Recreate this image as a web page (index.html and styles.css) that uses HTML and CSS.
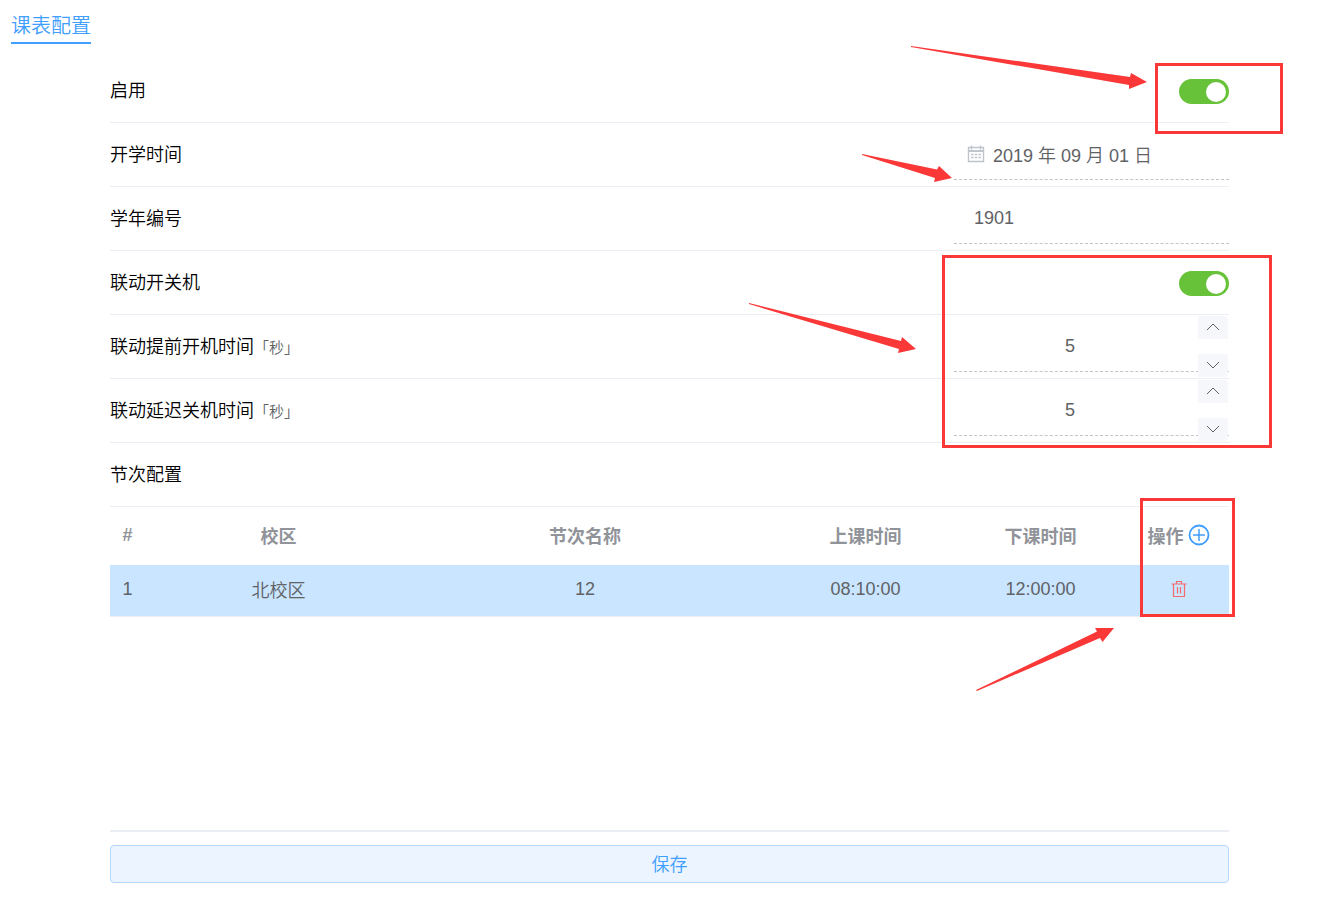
FILE: index.html
```html
<!DOCTYPE html>
<html lang="zh">
<head>
    <meta charset="UTF-8">
    <meta name="viewport" content="width=device-width, initial-scale=1.0">
    <title>课表配置</title>
    <link rel="stylesheet" href="styles.css">
</head>
<body>
    <h1 class="title">课表配置</h1>

    <form class="config">
        <div class="row">
            <label class="name" for="enable">启用</label>
            <input type="checkbox" class="switch" id="enable" checked>
        </div>
        <div class="row">
            <label class="name" for="startDate">开学时间</label>
            <div class="field date">
                <svg class="calendar" viewBox="0 0 18 18" fill="none" stroke="currentColor">
                    <path stroke-width="1.4" d="M1.500 2.500h15v14h-15zM4.500 .5v4M13.500 .5v4"/>
                    <path stroke-width="2" d="M1.500 6h15"/>
                    <path stroke-width="1.4" d="M4 9.500h10M4 12.500h10" stroke-dasharray="2.500 1.250"/>
                </svg>
                <input type="text" id="startDate" value="2019 年 09 月 01 日">
            </div>
        </div>
        <div class="row">
            <label class="name" for="yearNo">学年编号</label>
            <div class="field code">
                <input type="text" id="yearNo" value="1901">
            </div>
        </div>
        <div class="row">
            <label class="name" for="linkage">联动开关机</label>
            <input type="checkbox" class="switch" id="linkage" checked>
        </div>
        <div class="row">
            <label class="name" for="bootTime">联动提前开机时间<small>「秒」</small></label>
            <div class="field number">
                <input type="number" id="bootTime" value="5">
                <div class="steps">
                    <button type="button" aria-label="增加"><svg viewBox="0 0 14 8"><path d="M1 7l6-6 6 6"/></svg></button>
                    <button type="button" aria-label="减少"><svg viewBox="0 0 14 8"><path d="M1 1l6 6 6-6"/></svg></button>
                </div>
            </div>
        </div>
        <div class="row">
            <label class="name" for="shutTime">联动延迟关机时间<small>「秒」</small></label>
            <div class="field number">
                <input type="number" id="shutTime" value="5">
                <div class="steps">
                    <button type="button" aria-label="增加"><svg viewBox="0 0 14 8"><path d="M1 7l6-6 6 6"/></svg></button>
                    <button type="button" aria-label="减少"><svg viewBox="0 0 14 8"><path d="M1 1l6 6 6-6"/></svg></button>
                </div>
            </div>
        </div>
        <div class="row">
            <span class="name">节次配置</span>
        </div>

        <div class="table-box">
            <table>
                <thead>
                    <tr>
                        <th class="col-index">#</th>
                        <th class="col-campus">校区</th>
                        <th>节次名称</th>
                        <th class="col-time">上课时间</th>
                        <th class="col-time">下课时间</th>
                        <th class="col-action">
                            <div class="action">
                                操作
                                <button type="button" class="add" aria-label="添加">
                                    <svg viewBox="0 0 22 22" fill="none" stroke="currentColor">
                                        <circle cx="11" cy="11" r="9.5" stroke-width="1.8"/>
                                        <path d="M11 5v12M5 11h12" stroke-width="1.5"/>
                                    </svg>
                                </button>
                            </div>
                        </th>
                    </tr>
                </thead>
                <tbody>
                    <tr>
                        <td class="col-index">1</td>
                        <td>北校区</td>
                        <td>12</td>
                        <td>08:10:00</td>
                        <td>12:00:00</td>
                        <td>
                            <button type="button" class="remove" aria-label="删除">
                                <svg viewBox="0 0 16 18" fill="none" stroke="currentColor">
                                    <path stroke-width="1.2" d="M.5 4h15M5.500 4V1.500h5V4M2.500 4v12.500h11V4M6.500 7v6.500M9.500 7v6.500"/>
                                </svg>
                            </button>
                        </td>
                    </tr>
                </tbody>
            </table>
        </div>

        <button type="submit" class="save">保存</button>
    </form>

    <!-- 标注层 -->
    <svg class="marks" viewBox="0 0 1335 700">
        <g fill="none" stroke="#fb3838" stroke-width="3">
            <rect x="1156.5" y="64.5" width="125" height="68"/>
            <rect x="943.5" y="256.5" width="327" height="190"/>
            <rect x="1141.5" y="499.5" width="92" height="116"/>
        </g>
        <g fill="#fb3838">
            <path d="M911 46L1130 77L1131 73L1147 82L1129 89L1129 85L911 47z"/>
            <path d="M862 154L937 169.5L939 166L952 178L934 182L935 178L862 155z"/>
            <path d="M749 303L901 341L902 337L916 349L898 353L899 349L749 304z"/>
            <path d="M976 690L1097 631.5L1095 628L1114 628L1102.5 642L1100 638L977 691z"/>
        </g>
    </svg>
</body>
</html>
```
FILE: styles.css
```css
* {
    box-sizing: border-box;
}

body {
    display: flex;
    flex-direction: column;
    position: relative;
    min-height: 100vh;
    margin: 0;
    padding-bottom: 22px;
    background: #fff;
    color: #000;
    font-family: "Liberation Sans", "Noto Sans CJK SC", sans-serif;
    font-size: 18px;
    font-weight: 350;
}

button,
input {
    font: inherit;
}

button {
    padding: 0;
    border: none;
    background: none;
    cursor: pointer;
}

svg {
    display: block;
}

.title {
    align-self: flex-start;
    margin: 12px 11px 15px;
    padding-bottom: 2px;
    border-bottom: 2px solid #409eff;
    color: #409eff;
    font-size: 20px;
    font-weight: 350;
    line-height: 28px;
}

.config {
    flex: 1;
    display: flex;
    flex-direction: column;
    padding: 0 106px 0 110px;
}

.row {
    display: flex;
    align-items: center;
    justify-content: space-between;
    height: 64px;
    border-bottom: 1px solid #ebeef5;
}

.name {
    padding-bottom: 4px;
}

.name small {
    color: #606266;
    font-size: 15px;
}

/* 开关 */
.switch {
    appearance: none;
    display: flex;
    align-items: center;
    justify-content: flex-end;
    width: 50px;
    height: 25px;
    margin: 2px 0 0;
    padding: 0 3px;
    border-radius: 13px;
    background: #67c23a;
    cursor: pointer;
}

.switch::before {
    content: '';
    width: 20px;
    height: 20px;
    border-radius: 50%;
    background: #fff;
}

.switch:not(:checked) {
    justify-content: flex-start;
    background: #c0c4cc;
}

/* 输入框 */
.field {
    display: flex;
    align-items: center;
    position: relative;
    width: 275px;
    height: 50px;
    border-bottom: 1px dashed #c0c4cc;
}

.field input {
    flex: 1;
    min-width: 0;
    padding: 0;
    border: none;
    outline: none;
    background: none;
    color: #606266;
}

.date {
    gap: 8px;
    padding-left: 13px;
}

.calendar {
    width: 18px;
    height: 18px;
    color: #c0c4cc;
}

.code {
    padding-left: 20px;
}

.number {
    padding: 0 58px 0 15px;
}

.number input {
    appearance: textfield;
    text-align: center;
}

.number input::-webkit-inner-spin-button {
    appearance: none;
    margin: 0;
}

.steps {
    display: flex;
    flex-direction: column;
    justify-content: space-between;
    position: absolute;
    top: -6px;
    right: 1px;
    bottom: -6px;
    width: 30px;
}

.steps button {
    display: flex;
    align-items: center;
    justify-content: center;
    height: 23px;
    border-radius: 0 4px 0 0;
    background: #f5f7fa;
}

.steps button:last-child {
    border-radius: 0 0 4px 0;
}

.steps svg {
    width: 14px;
    height: 8px;
    fill: none;
    stroke: #606266;
}

/* 节次表格 */
.table-box {
    flex: 1;
    border-bottom: 2px solid #ebeef5;
}

table {
    width: 100%;
    border-collapse: collapse;
    table-layout: fixed;
    color: #606266;
    text-align: center;
}

th,
td {
    padding: 0 0 2px;
}

th {
    height: 58px;
    color: #909399;
    font-weight: bold;
}

td {
    height: 51px;
    border-bottom: 1px solid #ebeef5;
    background: #c9e5ff;
}

.col-index {
    width: 55px;
    padding-right: 20px;
}

.col-campus {
    width: 227px;
}

.col-time {
    width: 175px;
}

.col-action {
    width: 101px;
}

.action {
    display: flex;
    align-items: center;
    justify-content: center;
    gap: 4px;
}

.add {
    color: #409eff;
}

.add svg {
    width: 22px;
    height: 22px;
}

.remove {
    display: block;
    margin: 0 auto;
    color: #f56c6c;
}

.remove svg {
    width: 16px;
    height: 18px;
}

.save {
    height: 38px;
    margin-top: 13px;
    padding-bottom: 2px;
    border: 1px solid #b3d8ff;
    border-radius: 4px;
    background: #ecf5ff;
    color: #409eff;
}

.marks {
    position: absolute;
    top: 0;
    right: 0;
    width: 1335px;
    height: 700px;
    pointer-events: none;
}
```
